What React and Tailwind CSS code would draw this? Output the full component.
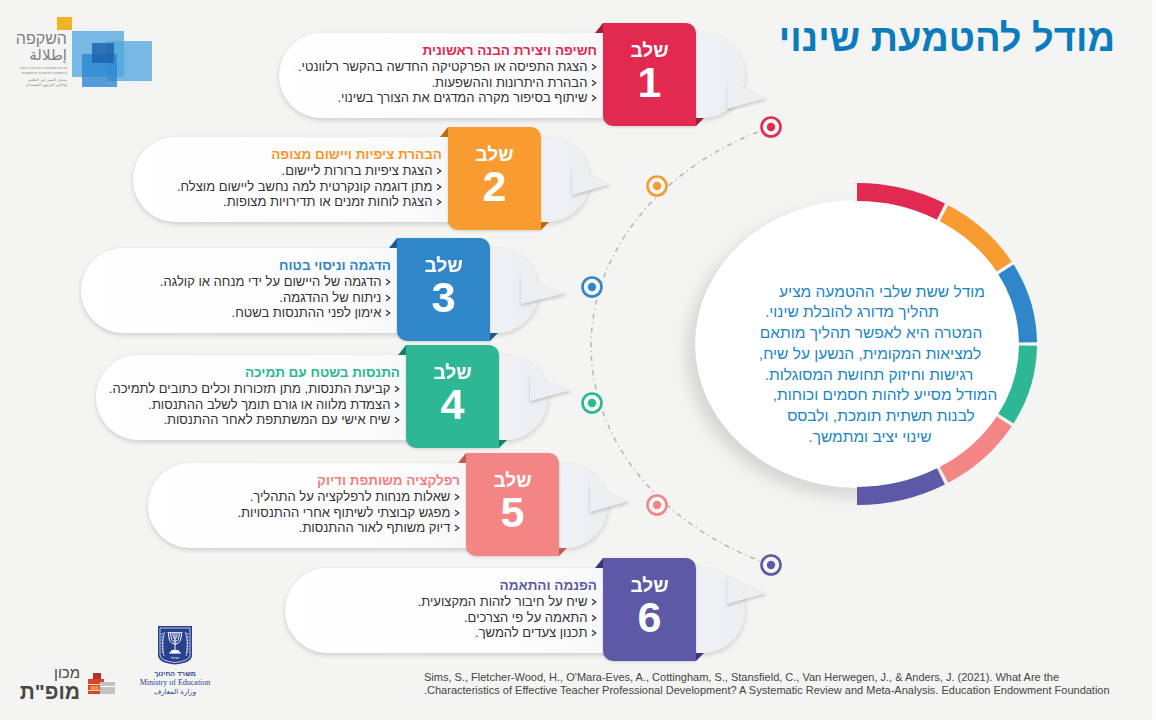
import React from "react";

const COLORS = ["#e2294f", "#f89b31", "#2f86c8", "#2db795", "#f38585", "#5d59a6"];

const stages = [
  {
    n: "1",
    row: "ml-[279px] w-[466px]",
    boxLeft: "left-[324px]",
    bg: "bg-[#e2294f]",
    titleCls: "text-[#e2294f]",
    dark: "#a61b38",
    ty: 65,
    tipDx: 22,
    title: "חשיפה ויצירת הבנה ראשונית",
    lines: [
      "הצגת התפיסה או הפרקטיקה החדשה בהקשר רלוונטי.",
      "הבהרת היתרונות וההשפעות.",
      "שיתוף בסיפור מקרה המדגים את הצורך בשינוי.",
    ],
  },
  {
    n: "2",
    row: "ml-[133px] w-[457px] mt-[1px]",
    boxLeft: "left-[315px]",
    bg: "bg-[#f89b31]",
    titleCls: "text-[#f7962b]",
    dark: "#c06a12",
    ty: 47,
    tipDx: 21,
    title: "הבהרת ציפיות ויישום מצופה",
    lines: [
      "הצגת ציפיות ברורות ליישום.",
      "מתן דוגמה קונקרטית למה נחשב ליישום מוצלח.",
      "הצגת לוחות זמנים או תדירויות מצופות.",
    ],
  },
  {
    n: "3",
    row: "ml-[81px] w-[458px] mt-[8px]",
    boxLeft: "left-[316px]",
    bg: "bg-[#2f86c8]",
    titleCls: "text-[#2f86c8]",
    dark: "#1d5d93",
    ty: 45,
    tipDx: 28,
    title: "הדגמה וניסוי בטוח",
    lines: [
      "הדגמה של היישום על ידי מנחה או קולגה.",
      "ניתוח של ההדגמה.",
      "אימון לפני ההתנסות בשטח.",
    ],
  },
  {
    n: "4",
    row: "ml-[96px] w-[452px] mt-[4px]",
    boxLeft: "left-[310px]",
    bg: "bg-[#2db795]",
    titleCls: "text-[#2db795]",
    dark: "#1b7f65",
    ty: 35,
    tipDx: 24,
    title: "התנסות בשטח עם תמיכה",
    lines: [
      "קביעת התנסות, מתן תזכורות וכלים כתובים לתמיכה.",
      "הצמדת מלווה או גורם תומך לשלב ההתנסות.",
      "שיח אישי עם המשתתפת לאחר ההתנסות.",
    ],
  },
  {
    n: "5",
    row: "ml-[148px] w-[460px] mt-[5px]",
    boxLeft: "left-[318px]",
    bg: "bg-[#f38585]",
    titleCls: "text-[#f07f7f]",
    dark: "#bf5b5b",
    ty: 38,
    tipDx: 22,
    title: "רפלקציה משותפת ודיוק",
    lines: [
      "שאלות מנחות לרפלקציה על התהליך.",
      "מפגש קבוצתי לשיתוף אחרי ההתנסויות.",
      "דיוק משותף לאור ההתנסות.",
    ],
  },
  {
    n: "6",
    row: "ml-[285px] w-[460px] mt-[2px]",
    boxLeft: "left-[318px]",
    bg: "bg-[#5d59a6]",
    titleCls: "text-[#5d59a6]",
    dark: "#3a3677",
    ty: 25,
    tipDx: 22,
    title: "הפנמה והתאמה",
    lines: ["שיח על חיבור לזהות המקצועית.", "התאמה על פי הצרכים.", "תכנון צעדים להמשך."],
  },
];

function Chevron() {
  return (
    <svg className="inline-block h-[8px] w-[6px] align-[0px]" viewBox="0 0 6 8">
      <polyline points="1,1.2 4.8,4 1,6.8" fill="none" stroke="#333333" strokeWidth="1.2" />
    </svg>
  );
}

function Stage({ s }) {
  const baseX = 12;
  const tipX = 30 + s.tipDx;
  const pts = `${baseX},${s.ty - 17} ${tipX},${s.ty} ${baseX},${s.ty + 11}`;
  return (
    <div className={`relative h-[103px] ${s.row}`}>
      <div className="relative mt-[10px] flex h-[85px] items-center justify-end rounded-full bg-[linear-gradient(90deg,#ffffff_0%,#fcfcfd_55%,#eceef2_100%)] pr-[148px] shadow-[0_2px_5px_rgba(0,0,0,0.17)]">
        <svg
          className="absolute right-[-30px] top-0 h-[85px] w-[60px] overflow-visible drop-shadow-[0_2px_1.5px_rgba(0,0,0,0.18)]"
          viewBox="0 0 60 85"
        >
          <polygon points={pts} fill="#eceef2" />
        </svg>
        <div dir="rtl" className="relative pb-[3px] text-right text-[13px] leading-[15.5px] text-[#333333]">
          <div className={`mb-[1px] text-[13.5px] font-bold ${s.titleCls}`}>{s.title}</div>
          {s.lines.map((l, i) => (
            <div key={i} className="whitespace-nowrap">
              <Chevron /> {l}
            </div>
          ))}
        </div>
      </div>
      <div
        className={`absolute top-0 ${s.boxLeft} flex h-[103px] w-[93px] flex-col items-center rounded-tr-[10px] rounded-bl-[10px] pt-[18px] text-white shadow-[0_1px_3px_rgba(0,0,0,0.15)] ${s.bg}`}
      >
        <svg className="absolute left-[-8px] top-0 h-[10px] w-[8px]" viewBox="0 0 8 10">
          <polygon points="8,0 8,10 0,10" fill={s.dark} />
        </svg>
        <svg className="absolute bottom-0 right-[-8px] h-[8px] w-[8px]" viewBox="0 0 8 8">
          <polygon points="0,0 8,0 0,8" fill={s.dark} />
        </svg>
        <div dir="rtl" className="text-[19px] font-bold leading-[20px]">
          שלב
        </div>
        <div className="text-[43px] font-bold leading-[43px]">{s.n}</div>
      </div>
    </div>
  );
}

function ArcLayer() {
  const markers = [
    [771, 127, COLORS[0]],
    [657, 186, COLORS[1]],
    [592, 287, COLORS[2]],
    [592, 403, COLORS[3]],
    [657, 505, COLORS[4]],
    [771, 565, COLORS[5]],
  ];
  return (
    <svg className="col-start-1 row-start-1 h-[720px] w-[1156px]" viewBox="0 0 1156 720">
      <path
        d="M 771 127 A 300 239 0 0 0 771 565"
        fill="none"
        stroke="#b5b5b5"
        strokeWidth="1.5"
        strokeDasharray="5 4 1.2 4"
      />
      {markers.map(([x, y, c], i) => (
        <g key={i}>
          <circle cx={x} cy={y} r="9.5" fill="#f7f7f6" stroke={c} strokeWidth="2.6" />
          <circle cx={x} cy={y} r="4.2" fill={c} />
        </g>
      ))}
    </svg>
  );
}

function Ring() {
  const cx = 162,
    cy = 161,
    rx = 171,
    ry = 152;
  const pt = (d) => {
    const t = (d * Math.PI) / 180;
    return [(cx + rx * Math.cos(t)).toFixed(2), (cy + ry * Math.sin(t)).toFixed(2)];
  };
  return (
    <svg className="absolute left-0 top-0 h-[322px] w-[342px]" viewBox="0 0 342 322">
      {COLORS.map((c, i) => {
        const a0 = -90 + i * 30 + (i === 0 ? 0 : 0.6);
        const a1 = -90 + (i + 1) * 30 - (i === 5 ? 0 : 0.6);
        const [x0, y0] = pt(a0);
        const [x1, y1] = pt(a1);
        return (
          <path
            key={i}
            d={`M ${x0} ${y0} A ${rx} ${ry} 0 0 1 ${x1} ${y1}`}
            fill="none"
            stroke={c}
            strokeWidth="18"
          />
        );
      })}
    </svg>
  );
}

function CircleGroup() {
  return (
    <div className="relative mr-[115px] mt-[121px] h-[322px] w-[342px]">
      <div
        dir="rtl"
        className="mt-[17px] flex h-[288px] w-[324px] flex-col items-center justify-center rounded-[50%] bg-white pl-[38px] pt-[41px] text-center text-[15.5px] leading-[20.7px] text-[#1a86c6] shadow-[-8px_8px_16px_rgba(0,0,0,0.13)]"
      >
        <div className="whitespace-nowrap pl-[12px]">מודל ששת שלבי ההטמעה מציע</div>
        <div className="whitespace-nowrap pr-[48px]">תהליך מדורג להובלת שינוי.</div>
        <div className="whitespace-nowrap pr-[10px]">המטרה היא לאפשר תהליך מותאם</div>
        <div className="whitespace-nowrap pr-[12px]">למציאות המקומית, הנשען על שיח,</div>
        <div className="whitespace-nowrap pr-[14px]">רגישות וחיזוק תחושת המסוגלות.</div>
        <div className="whitespace-nowrap pl-[18px]">המודל מסייע לזהות חסמים וכוחות,</div>
        <div className="whitespace-nowrap pl-[10px]">לבנות תשתית תומכת, ולבסס</div>
        <div className="whitespace-nowrap pr-[12px]">שינוי יציב ומתמשך.</div>
      </div>
      <Ring />
    </div>
  );
}

function TopLogo() {
  return (
    <div className="ml-[18px] mt-[17px] flex items-start">
      <div dir="rtl" className="flex w-[49px] flex-col pt-[13px] text-right text-[#808080]">
        <div className="text-[16px] leading-[17px]">השקפה</div>
        <div className="font-['DejaVu_Sans',sans-serif] text-[15px] leading-[16px]">إطلالة</div>
        <div className="mt-[2px] text-[4px] leading-[5px] text-[#8a8a8a]">
          <div>פורום מצוינות בהוראה וחינוך</div>
          <div>להשפעה פדגוגית מתמשכת</div>
          <div className="mt-[2px] font-['DejaVu_Sans',sans-serif]">منتدى التميز في التعليم</div>
          <div className="font-['DejaVu_Sans',sans-serif]">والتأثير التربوي المستدام</div>
        </div>
      </div>
      <svg className="ml-[-10px] h-[72px] w-[96px]" viewBox="0 0 96 72">
        <rect x="0" y="0" width="15" height="13" fill="#f0b323" />
        <rect x="15" y="14" width="52" height="46" fill="#4ea6dd" opacity="0.75" />
        <rect x="50" y="24" width="45" height="40" fill="#4ea6dd" opacity="0.75" />
        <rect x="25" y="37" width="35" height="33" fill="#2a86d0" opacity="0.8" />
        <rect x="35" y="26" width="22" height="20" fill="#1b5fa8" opacity="0.8" />
      </svg>
    </div>
  );
}

function Emblem() {
  return (
    <svg className="h-[40px] w-[38px]" viewBox="0 0 38 40">
      <path d="M2 1 H36 V30 Q36 38 19 39.5 Q2 38 2 30 Z" fill="#27418f" />
      <path d="M4 3 H34 V29.5 Q34 36 19 37.5 Q4 36 4 29.5 Z" fill="none" stroke="#fff" strokeWidth="0.7" />
      <g fill="none" stroke="#fff" strokeWidth="1">
        <line x1="19" y1="8" x2="19" y2="25" />
        <path d="M12.5 8 Q12.5 19 19 19 Q25.5 19 25.5 8" />
        <path d="M14.7 8 Q14.7 16.5 19 16.5 Q23.3 16.5 23.3 8" />
        <path d="M16.9 8 Q16.9 13.8 19 13.8 Q21.1 13.8 21.1 8" />
        <line x1="11.5" y1="7.5" x2="26.5" y2="7.5" strokeWidth="0.8" />
        <path d="M8 31 Q5 20 8.5 7" strokeWidth="0.7" />
        <path d="M30 31 Q33 20 29.5 7" strokeWidth="0.7" />
      </g>
      <g fill="#fff">
        <path d="M15.5 25 H22.5 L23.5 27 H14.5 Z" />
        <rect x="13.5" y="27" width="11" height="1.6" />
        {[9, 12, 15, 18, 21, 24, 27].map((y) => (
          <g key={y}>
            <ellipse cx={y < 20 ? 6.3 : 6.6} cy={y} rx="1.1" ry="0.6" />
            <ellipse cx={y < 20 ? 31.7 : 31.4} cy={y} rx="1.1" ry="0.6" />
          </g>
        ))}
        <text x="19" y="34.3" fontSize="3.4" textAnchor="middle" fontFamily="Liberation Sans">
          ישראל
        </text>
      </g>
    </svg>
  );
}

function MofetIcon() {
  return (
    <svg className="h-[22px] w-[28px]" viewBox="0 0 28 22">
      <rect x="5" y="0" width="8" height="6" fill="#b8322a" />
      <rect x="0" y="6" width="16" height="15" fill="#d4462c" />
      <rect x="12" y="9" width="15" height="12" fill="#c2c2c2" />
      <rect x="12" y="13" width="15" height="1" fill="#ffffff" />
      <rect x="0" y="11" width="12" height="1" fill="#ffffff" opacity="0.8" />
      <rect x="2" y="13" width="9" height="4" fill="#f08a3a" />
      <rect x="0" y="17" width="12" height="1" fill="#ffffff" opacity="0.7" />
    </svg>
  );
}

function Frame() {
  return (
    <div className="col-start-1 row-start-1 flex h-[720px] flex-col">
      <div className="flex flex-1 justify-between">
        <TopLogo />
        <div className="flex flex-col items-end">
          <h1 dir="rtl" className="mr-[37px] mt-[14px] text-[38px] font-bold leading-[48px] text-[#0a7cbe]">
            מודל להטמעת שינוי
          </h1>
          <CircleGroup />
        </div>
      </div>
      <div className="flex h-[95px] items-start">
        <div className="ml-[18px] mt-[40px] flex items-center gap-[8px]">
          <div dir="rtl" className="w-[62px] text-right text-[#484848]">
            <div className="text-[15px] leading-[15px]">מכון</div>
            <div className="mt-[2px] text-[21px] font-bold leading-[20px]">מופ"ת</div>
          </div>
          <MofetIcon />
        </div>
        <div className="ml-[20px] flex w-[78px] flex-col items-center text-[#2d4390]">
          <Emblem />
          <div dir="rtl" className="mt-[4px] text-[7px] font-bold leading-[9px]">
            משרד החינוך
          </div>
          <div className="font-['Liberation_Serif',serif] text-[8px] leading-[10px]">Ministry of Education</div>
          <div dir="rtl" className="font-['DejaVu_Sans',sans-serif] text-[7px] leading-[9px]">
            وزارة المعارف
          </div>
        </div>
        <div className="ml-[210px] mt-[46px] text-[11px] leading-[13px] text-[#444444]">
          <div className="whitespace-nowrap">
            Sims, S., Fletcher-Wood, H., O'Mara-Eves, A., Cottingham, S., Stansfield, C., Van Herwegen, J., &amp;
            Anders, J. (2021). What Are the
          </div>
          <div className="whitespace-nowrap">
            .Characteristics of Effective Teacher Professional Development? A Systematic Review and Meta-Analysis.
            Education Endowment Foundation
          </div>
        </div>
      </div>
    </div>
  );
}

function Stages() {
  return (
    <div className="col-start-1 row-start-1 flex flex-col items-start pt-[23px]">
      {stages.map((s) => (
        <Stage key={s.n} s={s} />
      ))}
    </div>
  );
}

export default function App() {
  return (
    <div className="relative grid h-[720px] w-[1156px] grid-cols-1 grid-rows-1 overflow-hidden border-r-[4px] border-[#fbfbfb] bg-[#f4f4f2] font-['Liberation_Sans',Arial,sans-serif]">
      <Frame />
      <ArcLayer />
      <Stages />
    </div>
  );
}
